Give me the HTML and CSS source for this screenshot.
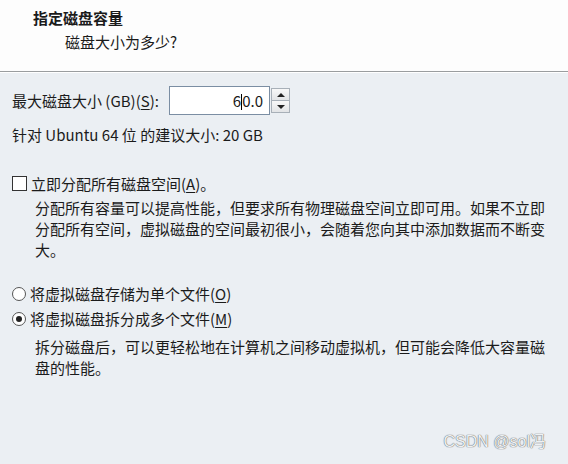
FILE: index.html
```html
<!DOCTYPE html>
<html lang="zh-CN">
<head>
  <meta charset="UTF-8" />
  <title>指定磁盘容量</title>
  <link rel="stylesheet" href="styles.css">
</head>
<body>

<div class="header">
  <div class="title">指定磁盘容量</div>
  <div class="subtitle">磁盘大小为多少?</div>
</div>

<div class="content">
  <div class="size-row">
    <span class="label">最大磁盘大小 (GB)(<u>S</u>):</span>
    <div class="spin">
      <div class="spin-input">6<span class="caret"></span>0.0</div>
      <div class="spin-btns">
        <div class="spin-btn"><span class="tri-up"></span></div>
        <div class="spin-btn"><span class="tri-down"></span></div>
      </div>
    </div>
  </div>
  <div class="hint">针对 Ubuntu 64 位 的建议大小: 20 GB</div>

  <div class="option check-row">
    <span class="checkbox"></span>
    <span>立即分配所有磁盘空间(<u>A</u>)。</span>
  </div>
  <div class="desc">
    分配所有容量可以提高性能，但要求所有物理磁盘空间立即可用。如果不立即<br>
    分配所有空间，虚拟磁盘的空间最初很小，会随着您向其中添加数据而不断变<br>
    大。
  </div>

  <div class="option radio-first">
    <span class="radio"></span>
    <span>将虚拟磁盘存储为单个文件(<u>O</u>)</span>
  </div>
  <div class="option">
    <span class="radio checked"></span>
    <span>将虚拟磁盘拆分成多个文件(<u>M</u>)</span>
  </div>
  <div class="desc desc-split">
    拆分磁盘后，可以更轻松地在计算机之间移动虚拟机，但可能会降低大容量磁<br>
    盘的性能。
  </div>
</div>

<div class="watermark">CSDN @sol冯</div>

</body>
</html>
```

FILE: styles.css
```css
body { margin: 0; width: 568px; height: 464px; overflow: hidden; position: relative; background: #ebeff3; color: #1b1b1b; font-family: "Noto Sans CJK SC", "Liberation Sans", sans-serif; font-size: 15px; line-height: 21px; }
u { text-decoration-thickness: 1px; text-underline-offset: 2px; }

.header { height: 72px; background: #fdfdfd; border-bottom: 1px solid #9a9d9f; box-shadow: 0 1px 0 #fff; box-sizing: border-box; padding-top: 7px; }
.title { font-weight: bold; margin-left: 33px; }
.subtitle { margin-left: 65px; margin-top: 3px; }

.content { padding: 14px 0 0 12px; }
.size-row { display: flex; align-items: center; height: 29px; }
.label { width: 157px; }
.spin { display: flex; align-items: center; }
.spin-input { width: 93px; height: 27px; border: 1px solid #7b8ea3; background: #fff; text-align: right; padding-right: 6px; line-height: 27px; font-size: 15px; }
.caret { display: inline-block; width: 1px; height: 16px; background: #000; vertical-align: -3px; }
.spin-btns { display: flex; flex-direction: column; margin-left: 1px; }
.spin-btn { width: 17px; height: 11px; border: 1px solid #a8b0b8; background: linear-gradient(#f8f8f8, #e2e4e6); display: flex; align-items: center; justify-content: center; }
.spin-btn + .spin-btn { border-top: none; }
.tri-up { width: 0; height: 0; border-left: 4px solid transparent; border-right: 4px solid transparent; border-bottom: 4px solid #222; }
.tri-down { width: 0; height: 0; border-left: 4px solid transparent; border-right: 4px solid transparent; border-top: 4px solid #222; }

.hint { margin-top: 9px; }

.option { display: flex; align-items: center; gap: 4px; margin-top: 4px; }
.check-row { margin-top: 28px; }
.checkbox { width: 13px; height: 13px; border: 1px solid #333; background: #fff; }
.desc { margin: 3px 0 0 23px; }
.desc-split { margin-top: 7px; }

.radio-first { margin-top: 23px; }
.radio { width: 12px; height: 12px; border: 1px solid #555; border-radius: 50%; background: #fff; position: relative; }
.radio.checked::after { content: ""; position: absolute; left: 3px; top: 3px; width: 6px; height: 6px; border-radius: 50%; background: #222; }

.watermark { position: absolute; right: 22px; bottom: 12px; font-family: "Liberation Sans", "Noto Sans CJK SC", sans-serif; font-size: 16px; color: #eef1f3; text-shadow: 0 0 1px #666, 0 0 1px #666; }
```
